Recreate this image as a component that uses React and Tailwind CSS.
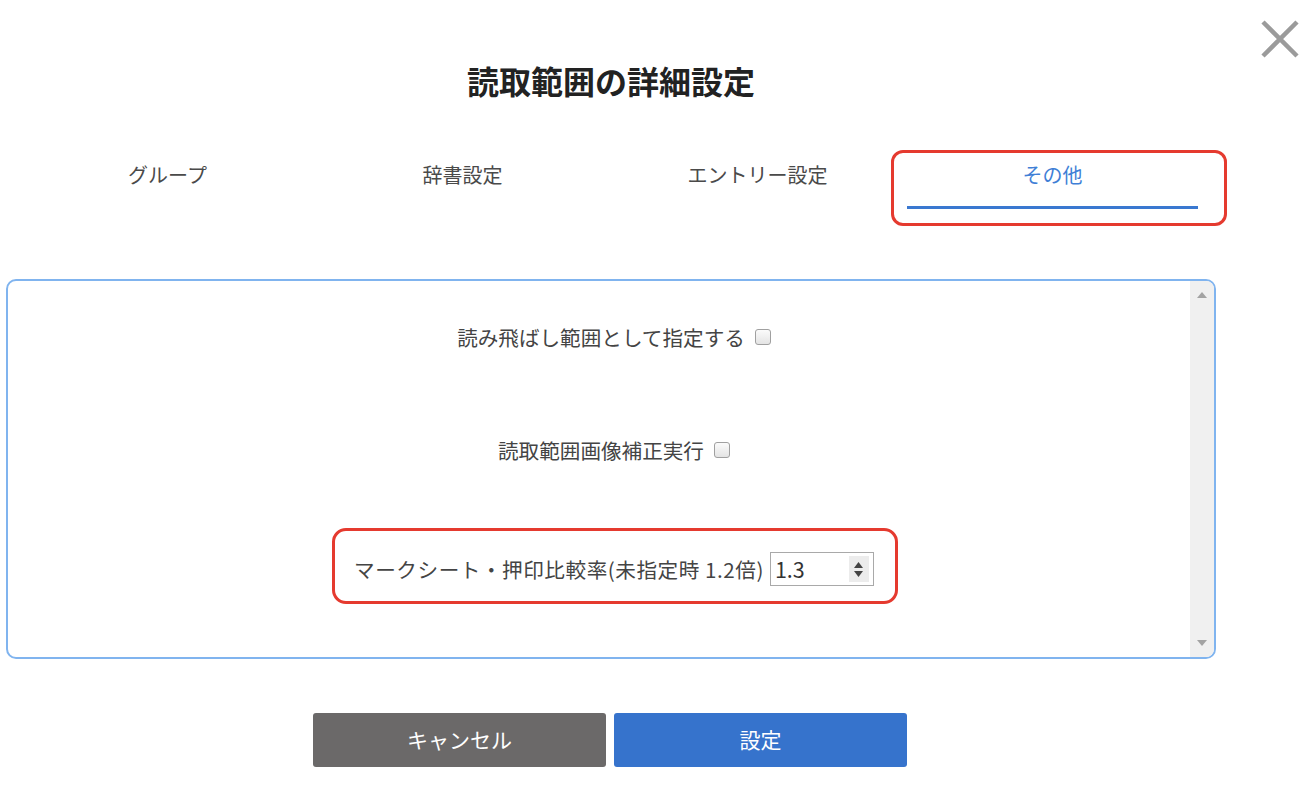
const tabs = ['グループ', '辞書設定', 'エントリー設定', 'その他'];

function Checkbox() {
    return (
        <span className="inline-block w-[16px] h-[16px] rounded-[3px] border border-[#a0a0a0] bg-gradient-to-b from-[#fbfbfb] to-[#e4e4e4]" />
    );
}

function NumberInput({ value }) {
    return (
        <div className="flex items-center w-[104px] h-[34px] border border-[#a9a9a9] bg-white pl-[4px] pr-[4px] tracking-normal">
            <span className="flex-1 text-[21.5px] leading-none text-[#333]">{value}</span>
            <div className="flex flex-col items-center justify-center w-[20px] h-[26px] bg-[#ececec] gap-[3px]">
                <svg width="9" height="6" viewBox="0 0 9 6"><path d="M4.5 0L9 6H0z" fill="#444" /></svg>
                <svg width="9" height="6" viewBox="0 0 9 6"><path d="M0 0h9L4.5 6z" fill="#444" /></svg>
            </div>
        </div>
    );
}

export default function App() {
    return (
        <div
            className="relative w-[1306px] h-[788px] bg-white text-[#444] overflow-hidden"
            style={{ fontFamily: '"Noto Sans CJK JP", "Noto Sans", sans-serif' }}
        >
            {/* close */}
            <button className="absolute top-[19px] left-[1260px] w-[40px] h-[40px]">
                <svg width="40" height="40" viewBox="0 0 40 40">
                    <path d="M3 3L37 37M37 3L3 37" stroke="#9b9b9b" strokeWidth="4.5" />
                </svg>
            </button>

            <div className="ml-[6px] w-[1210px]">
                <h1 className="pt-[62px] text-center text-[32px] leading-[36px] font-bold text-[#222]">
                    読取範囲の詳細設定
                </h1>

                <div className="mt-[62px] ml-[14px] grid grid-cols-[repeat(4,295px)]">
                    {tabs.map((t, i) => (
                        <div key={t} className="relative px-[2px]">
                            <div
                                className={
                                    'text-center text-[20px] leading-[30px] ' +
                                    (i === 3 ? 'text-[#3f7fd6]' : 'text-[#4a4a4a]')
                                }
                            >
                                {t}
                            </div>
                            <div className={'mt-[16px] h-[3px] ' + (i === 3 ? 'bg-[#3a78d0]' : 'bg-transparent')} />
                            {i === 3 && (
                                <div className="absolute left-[-14px] top-[-10px] w-[336px] h-[76px] border-[3px] border-[#e53a2f] rounded-[12px]" />
                            )}
                        </div>
                    ))}
                </div>

                <div className="mt-[70px] h-[380px] flex border-2 border-[#80b4ef] rounded-[10px] overflow-hidden">
                    <div className="flex-1 pl-[30px] flex flex-col items-center">
                        <div className="mt-[41px] flex items-center gap-[10px] text-[20.6px] leading-[30px]">
                            <span>読み飛ばし範囲として指定する</span>
                            <Checkbox />
                        </div>
                        <div className="mt-[83px] flex items-center gap-[10px] text-[20.6px] leading-[30px]">
                            <span>読取範囲画像補正実行</span>
                            <Checkbox />
                        </div>
                        <div className="relative mt-[87px] flex items-center gap-[6px] text-[20.6px] leading-[34px]">
                            <span className="tracking-[0.55px]">マークシート・押印比較率(未指定時 1.2倍)</span>
                            <NumberInput value="1.3" />
                            <div className="absolute left-[-22px] top-[-24px] w-[566px] h-[76px] border-[3px] border-[#e53a2f] rounded-[14px]" />
                        </div>
                    </div>
                    <div className="w-[24px] bg-[#f0f0f0] flex flex-col items-center justify-between py-[11px]">
                        <svg width="10" height="6" viewBox="0 0 10 6"><path d="M5 0L10 6H0z" fill="#a3a3a3" /></svg>
                        <svg width="10" height="6" viewBox="0 0 10 6"><path d="M0 0h10L5 6z" fill="#a3a3a3" /></svg>
                    </div>
                </div>

                <div className="mt-[54px] flex justify-center gap-[8px] pr-[2px]">
                    <button className="w-[293px] h-[54px] rounded-[3px] bg-[#6b6969] text-white text-[21px]">
                        キャンセル
                    </button>
                    <button className="w-[293px] h-[54px] rounded-[3px] bg-[#3673cc] text-white text-[21px]">
                        設定
                    </button>
                </div>
            </div>
        </div>
    );
}
